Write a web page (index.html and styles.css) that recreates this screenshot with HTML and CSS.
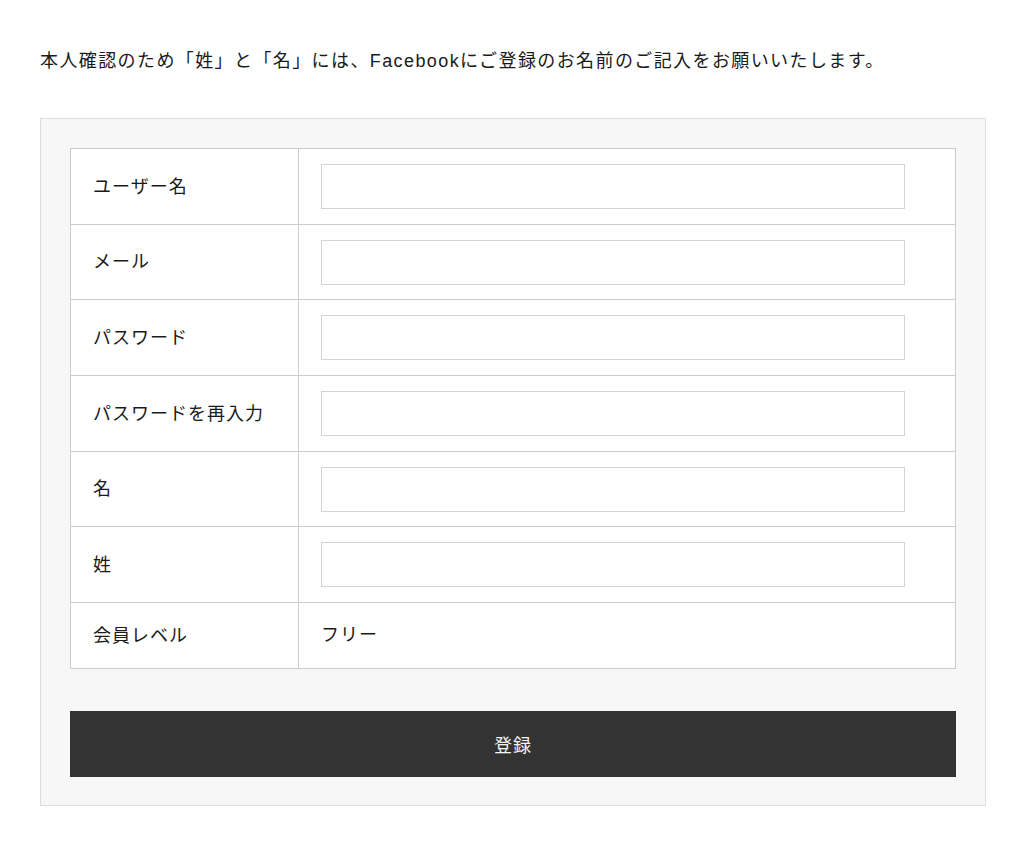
FILE: index.html
```html
<!DOCTYPE html>
<html lang="ja">
<head>
  <meta charset="UTF-8">
  <title>会員登録</title>
  <link rel="stylesheet" href="styles.css">
</head>
<body>

  <p class="note">本人確認のため「姓」と「名」には、Facebookにご登録のお名前のご記入をお願いいたします。</p>

  <form class="register" onsubmit="event.preventDefault()">
    <table class="fields">
      <tr>
        <th>ユーザー名</th>
        <td><input type="text" id="user_login"></td>
      </tr>
      <tr>
        <th>メール</th>
        <td><input type="email" id="user_email"></td>
      </tr>
      <tr>
        <th>パスワード</th>
        <td><input type="password" id="pass1"></td>
      </tr>
      <tr>
        <th>パスワードを再入力</th>
        <td><input type="password" id="pass2"></td>
      </tr>
      <tr>
        <th>名</th>
        <td><input type="text" id="first_name"></td>
      </tr>
      <tr>
        <th>姓</th>
        <td><input type="text" id="last_name"></td>
      </tr>
      <tr>
        <th>会員レベル</th>
        <td class="text">フリー</td>
      </tr>
    </table>

    <button type="submit">登録</button>
  </form>

</body>
</html>
```

FILE: styles.css
```css
body {
  font-family: "Liberation Sans", "Noto Sans CJK JP", sans-serif;
  font-size: 18px;
  line-height: 28px;
  letter-spacing: 1px;
  color: #1a1a1a;
  margin: 0;
  padding: 47px 38px 0 40px;
}

.note {
  margin: 0 0 43px;
  letter-spacing: 1.4px;
}

.register {
  background-color: #f7f7f7;
  border: 1px solid #dddddd;
  padding: 29px 29px 28px;
}

.fields {
  width: 100%;
  border-collapse: collapse;
  background-color: #fff;
  border: 1px solid #cccccc;
}

.fields th,
.fields td {
  border: 1px solid #cccccc;
  padding: 15px 22px 14.7px;
  vertical-align: middle;
  text-align: left;
  font-weight: normal;
}

.fields th {
  width: 183px;
}

.fields td.text {
  padding-top: 18px;
  padding-bottom: 18px;
  line-height: 29px;
}

.fields input {
  display: block;
  box-sizing: border-box;
  width: 584px;
  height: 45px;
  border: 1px solid #d3d3d3;
  padding: 5px 10px;
  font-size: 16px;
  background: #fff;
}

button {
  display: block;
  width: 100%;
  height: 66px;
  margin-top: 42px;
  background-color: #333;
  color: #f5f5f5;
  border: none;
  font-family: inherit;
  font-size: 18px;
  letter-spacing: 1px;
  cursor: pointer;
}

button:hover {
  background-color: #444;
}
```
